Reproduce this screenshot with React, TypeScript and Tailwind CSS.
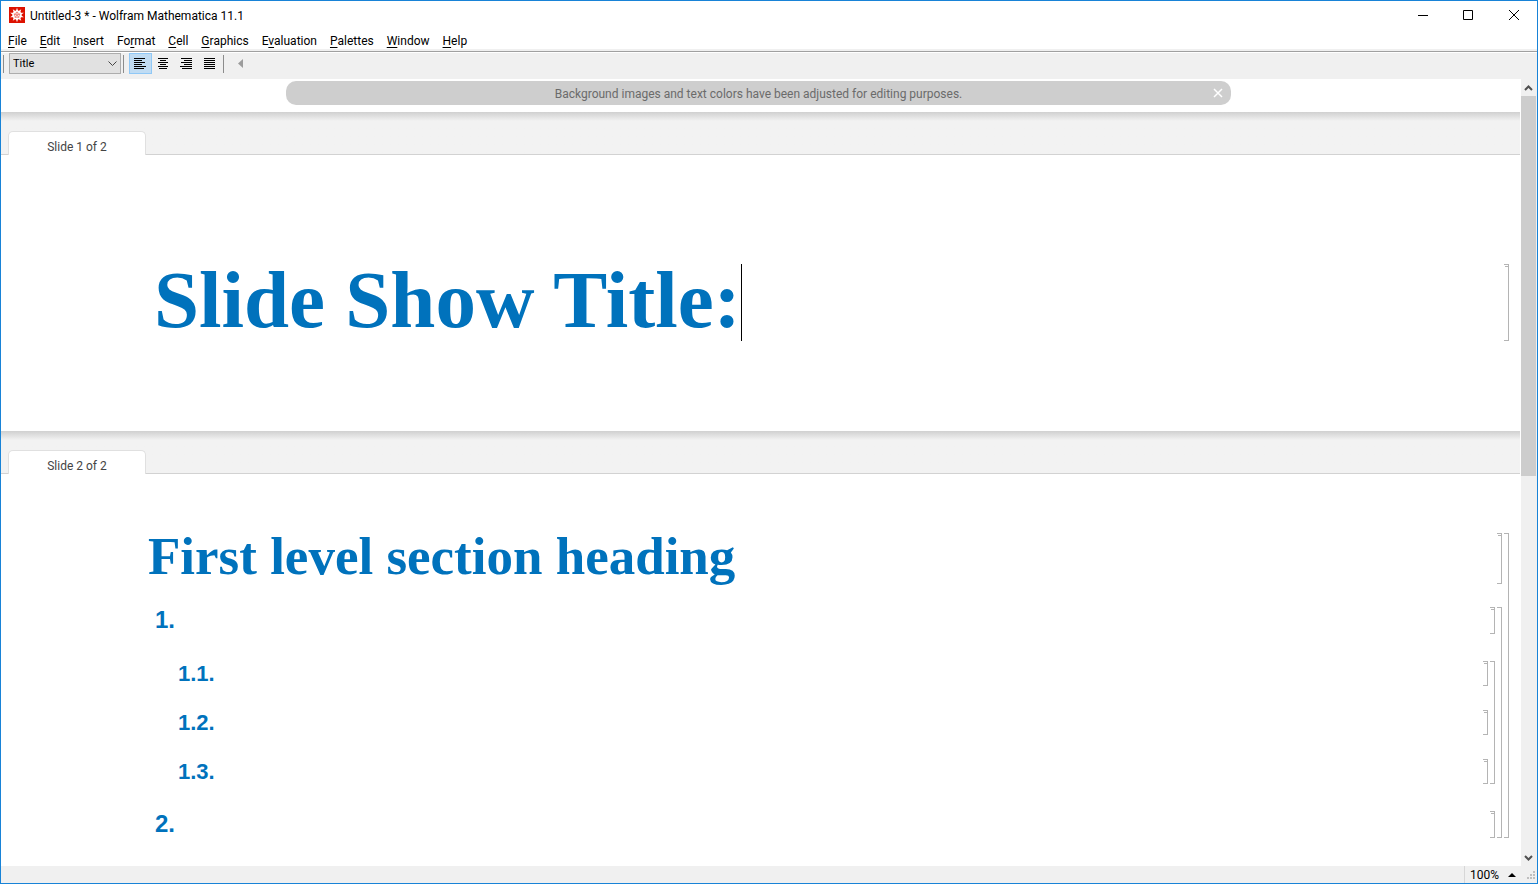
import type { ReactNode } from 'react';

const MENUS: [string, string, string][] = [
  ['', 'F', 'ile'],
  ['', 'E', 'dit'],
  ['', 'I', 'nsert'],
  ['Fo', 'r', 'mat'],
  ['', 'C', 'ell'],
  ['', 'G', 'raphics'],
  ['E', 'v', 'aluation'],
  ['', 'P', 'alettes'],
  ['', 'W', 'indow'],
  ['', 'H', 'elp'],
];

// [start x, end x] of the six text lines in each alignment icon
const ALIGNMENTS: { label: string; lines: [number, number][] }[] = [
  { label: 'Align left', lines: [[0, 11], [0, 8], [0, 11], [0, 8], [0, 12], [0, 10]] },
  { label: 'Align center', lines: [[1, 11], [3, 9], [1, 11], [3, 9], [1, 11], [2, 10]] },
  { label: 'Align right', lines: [[1, 12], [4, 12], [1, 12], [4, 12], [0, 12], [2, 12]] },
  { label: 'Justify', lines: [[1, 12], [1, 12], [1, 12], [1, 12], [1, 12], [1, 12]] },
];

function SpikeyIcon() {
  const spikes = Array.from({ length: 10 }, (_, i) => i * 36);
  return (
    <svg viewBox="0 0 16 16" className="size-4 shrink-0" aria-hidden="true">
      <rect width="16" height="16" fill="#dd1100" />
      {spikes.map(a => (
        <path key={a} d="M6.2 6 8 .8 9.8 6z" fill="#fff" transform={`rotate(${a} 8 8)`} />
      ))}
      <circle cx="8" cy="8" r="4.6" fill="#fff" />
      <path d="M8 8V4.6M8 8l3.2-1M8 8l2 2.8M8 8l-2 2.8M8 8 4.8 7" stroke="#ee6a60" strokeWidth=".8" />
      <path d="m8 5.2 2.7 2-1 3.1H6.3l-1-3.1z" fill="none" stroke="#ee6a60" strokeWidth=".7" />
    </svg>
  );
}

function Separator() {
  return <div className="w-px h-[18px] mt-[2px] bg-[#8c8c8c]" />;
}

function TitleBar() {
  return (
    <header className="flex items-start h-[30px] pl-2 bg-white">
      <div className="flex items-center h-7 gap-[5px]">
        <SpikeyIcon />
        <h1 className="pt-[2px] text-[12px] leading-4">Untitled-3 * - Wolfram Mathematica 11.1</h1>
      </div>
      <div className="ml-auto flex">
        <button aria-label="Minimize" className="w-11 h-7 grid place-items-center">
          <svg width="10" height="10" stroke="#000" fill="none"><path d="M0 5.5h10" /></svg>
        </button>
        <button aria-label="Maximize" className="w-[46px] h-7 grid place-items-center">
          <svg width="10" height="10" stroke="#000" fill="none"><path d="M.5.5h9v9h-9z" /></svg>
        </button>
        <button aria-label="Close" className="w-[46px] h-7 grid place-items-center">
          <svg width="10" height="10" stroke="#000" fill="none" className="overflow-visible">
            <path d="m0 0 10 10m0-10-10 10" />
          </svg>
        </button>
      </div>
    </header>
  );
}

function Toolbar() {
  return (
    <div className="flex h-[26px] pl-[2px] bg-[#f0f0f0]">
      <Separator />
      <div className="relative ml-[5px] w-28 h-[21px]">
        <select
          aria-label="Cell style"
          className="appearance-none block w-full h-full pt-[2px] pl-[3px] text-[11px] bg-[#e1e1e1] border border-[#adadad]"
        >
          <option>Title</option>
        </select>
        <svg width="9" height="6" className="absolute right-1 top-2 pointer-events-none" fill="none" stroke="#444">
          <path d="m.5.5 4 4 4-4" />
        </svg>
      </div>
      <div className="flex ml-[2px]">
        <Separator />
      </div>
      <div className="flex ml-[5px]">
        {ALIGNMENTS.map(({ label, lines }, i) => (
          <button
            key={label}
            aria-label={label}
            className={
              i === 0
                ? 'w-[23px] h-[21px] flex items-center pl-1 bg-[#c0dcf3] border border-[#90c8f6]'
                : 'w-[23px] h-[21px] flex items-center pl-1 border border-transparent'
            }
          >
            <svg width="12" height="11" stroke="#000">
              {lines.map(([from, to], row) => (
                <path key={row} d={`M${from} ${row * 2 + 0.5}H${to}`} />
              ))}
            </svg>
          </button>
        ))}
      </div>
      <div className="flex ml-[2px]">
        <Separator />
      </div>
      <button aria-label="Previous" className="ml-2 w-[17px] h-[21px] grid place-items-center">
        <svg width="5" height="9" fill="#9c9c9c"><path d="M5 0v9L0 4.5z" /></svg>
      </button>
    </div>
  );
}

function Notice() {
  return (
    <div className="h-[33px] pt-[2px] pl-[285px] pr-[289px] bg-white">
      <div className="flex items-center h-6 pl-[18px] pr-2 rounded-[10px] bg-[#cecece] text-[#6b6b6b]">
        <p className="flex-1 pt-px text-center text-[12px] leading-4">
          Background images and text colors have been adjusted for editing purposes.
        </p>
        <button aria-label="Dismiss" className="size-[10px]">
          <svg width="10" height="10" fill="none" stroke="#fff" strokeWidth="1.5"><path d="m1 1 8 8m0-8-8 8" /></svg>
        </button>
      </div>
    </div>
  );
}

function SlideBreak({ label }: { label: string }) {
  return (
    <div className="h-[43px] border-b border-[#d2d2d2] bg-[#f2f2f2] bg-linear-to-b from-[#d0d0d0] to-[#f2f2f2] to-[9px]">
      <div className="pt-[19px] pl-[7px]">
        <div className="w-[138px] h-6 pt-[7px] rounded-t-[5px] border border-b-0 border-[#e0e0e0] bg-white text-center text-[12px] leading-4 text-[#444]">
          {label}
        </div>
      </div>
    </div>
  );
}

function Bracket({ tick = false }: { tick?: boolean }) {
  return (
    <div className="w-[5px] shrink-0 border border-l-0 border-[#b4b4b4]">
      {tick && <div className="mt-px ml-px h-px bg-[#b4b4b4]" />}
    </div>
  );
}

function Cell({ children }: { children: ReactNode }) {
  return (
    <div className="flex gap-[2px]">
      <div className="flex-1">{children}</div>
      <Bracket tick />
    </div>
  );
}

function CellGroup({ className, children }: { className: string; children: ReactNode }) {
  return (
    <div className="flex gap-[2px]">
      <div className={`flex-1 flex flex-col ${className}`}>{children}</div>
      <Bracket />
    </div>
  );
}

function ScrollBar() {
  return (
    <div className="w-4 pr-px shrink-0 flex flex-col bg-[#f0f0f0]">
      <button aria-label="Scroll up" className="h-[17px] grid place-items-center">
        <svg width="9" height="6" fill="none" stroke="#505050" strokeWidth="2"><path d="m1 5 3.5-3.5L8 5" /></svg>
      </button>
      <div className="flex-[380] bg-[#cdcdcd]" />
      <div className="flex-[373]" />
      <button aria-label="Scroll down" className="h-[17px] grid place-items-center">
        <svg width="9" height="6" fill="none" stroke="#505050" strokeWidth="2"><path d="m1 1 3.5 3.5L8 1" /></svg>
      </button>
    </div>
  );
}

function StatusBar() {
  return (
    <footer className="flex justify-end h-[17px] bg-[#f0f0f0]">
      <button className="flex items-center gap-[9px] pl-[5px] border-l border-[#d7d7d7] text-[12px] leading-4">
        100%
        <svg width="8" height="4"><path d="M4 0l4 4H0z" /></svg>
      </button>
      <svg width="11" height="11" className="ml-[9px] mr-px mt-1" fill="#bfbfbf">
        <path d="M8 1h2v2H8zM5 4h2v2H5zM8 4h2v2H8zM2 7h2v2H2zM5 7h2v2H5zM8 7h2v2H8z" />
      </svg>
    </footer>
  );
}

export default function App() {
  return (
    <div className="min-h-screen flex flex-col border border-[#1883d7] bg-white text-black font-['Roboto','Noto_Sans',sans-serif]">
      <TitleBar />
      <nav className="flex gap-[13px] h-[18px] pl-[7px] text-[12px] leading-5">
        {MENUS.map(([before, key, after]) => (
          <button key={before + key + after} className="whitespace-nowrap">
            {before}<u className="underline-offset-2">{key}</u>{after}
          </button>
        ))}
      </nav>
      <div className="h-1 bg-[#f0f0f0] pt-[2px]">
        <div className="h-[2px] bg-white border-t border-[#a0a0a0]" />
      </div>
      <Toolbar />

      <div className="flex-1 flex">
        <main className="flex-1 pr-px">
          <Notice />

          <SlideBreak label="Slide 1 of 2" />
          <section className="pt-[109px] pb-[90px] pl-[151px] pr-[11px]">
            <Cell>
              <h2 className="flex h-[77px] pl-[2px] text-[81px] leading-[73px] font-bold text-[#0072bc] font-['Liberation_Serif',serif]">
                Slide Show Title:
                <span className="w-px bg-black" />
              </h2>
            </Cell>
          </section>

          <SlideBreak label="Slide 2 of 2" />
          <section className="pt-[59px] pb-7 pl-[147px] pr-[11px] font-bold text-[#0072bc] font-['Liberation_Sans',sans-serif]">
            <CellGroup className="gap-[23px]">
              <Cell>
                <h2 className="h-[51px] text-[53px] leading-[47px] font-['Liberation_Serif',serif]">
                  First level section heading
                </h2>
              </Cell>
              <CellGroup className="gap-[27px] text-[24px] leading-[25px]">
                <Cell><p className="pl-[7px] pb-[2px]">1.</p></Cell>
                <CellGroup className="gap-6 text-[22px]">
                  <Cell><p className="pl-[30px]">1.1.</p></Cell>
                  <Cell><p className="pl-[30px]">1.2.</p></Cell>
                  <Cell><p className="pl-[30px]">1.3.</p></Cell>
                </CellGroup>
                <Cell><p className="pl-[7px] pb-[2px]">2.</p></Cell>
              </CellGroup>
            </CellGroup>
          </section>
        </main>
        <ScrollBar />
      </div>
      <StatusBar />
    </div>
  );
}
